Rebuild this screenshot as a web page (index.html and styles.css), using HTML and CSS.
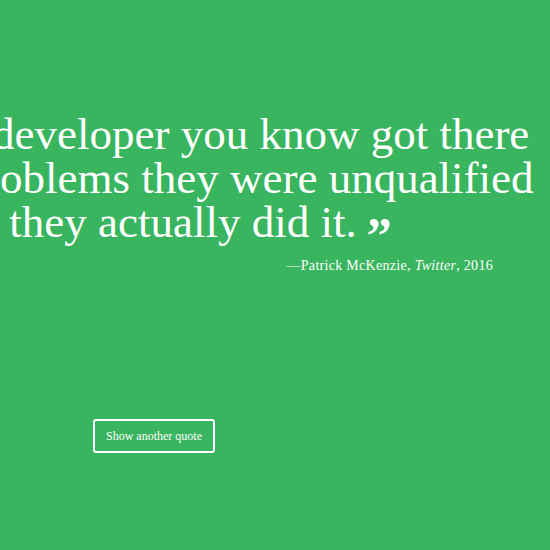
FILE: index.html
```html
<!DOCTYPE html>
<html>
<head>
<meta charset="utf-8">
<link rel="stylesheet" href="styles.css">
</head>
<body>
<main class="page">
  <section class="quote">
    <blockquote class="quote-text">
      <span class="line line-1">developer you know got there</span>
      <span class="line line-2">oblems they were unqualified</span>
      <span class="line line-3"> they actually did it.<span class="close-mark">”</span></span>
    </blockquote>
    <p class="attribution">—Patrick McKenzie, <em>Twitter</em>, 2016</p>
  </section>
  <div class="actions">
    <button class="btn">Show another quote</button>
  </div>
</main>
</body>
</html>
```

FILE: styles.css
```css
html, body {
  margin: 0;
  padding: 0;
  height: 100%;
  overflow: hidden;
}
body {
  background: #38b55e;
  color: #ffffff;
  font-family: "Liberation Serif", "DejaVu Serif", serif;
}
.page {
  display: flex;
  flex-direction: column;
  padding-top: 112px;
}
.quote {
  display: flex;
  flex-direction: column;
}
.quote-text {
  margin: 0;
  font-size: 45px;
  line-height: 44px;
}
.line {
  display: block;
  white-space: pre;
  height: 44px;
}
.line-1 { margin-left: -8px; }
.line-3 { margin-left: -2px; }
.close-mark {
  display: inline-block;
  font-size: 50px;
  font-weight: bold;
  line-height: 20px;
  margin-left: 10px;
  vertical-align: -15px;
}
.attribution {
  margin: 14px 57px 0 0;
  align-self: flex-end;
  font-size: 14px;
  letter-spacing: 0.3px;
}
.actions {
  display: flex;
  padding: 145px 0 0 93px;
}
.btn {
  background: transparent;
  color: #ffffff;
  border: 2px solid #ffffff;
  border-radius: 3px;
  font-family: "Liberation Serif", serif;
  font-size: 12px;
  padding: 0;
  height: 34px;
  width: 122px;
  white-space: nowrap;
}
```
